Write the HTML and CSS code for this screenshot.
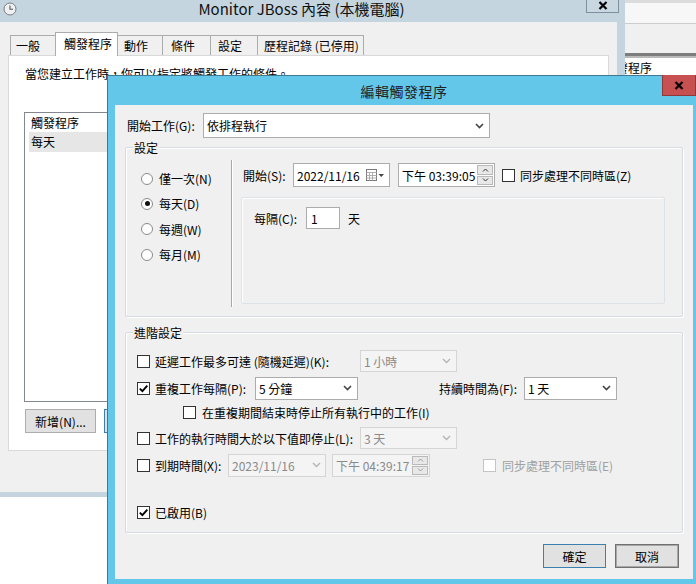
FILE: index.html
```html
<!DOCTYPE html>
<html lang="zh-Hant">
<head>
    <meta charset="UTF-8">
    <meta name="viewport" content="width=device-width, initial-scale=1.0">
    <title>編輯觸發程序</title>
    <link rel="stylesheet" href="styles.css">
</head>
<body>
<div class="desk">

    <!-- window further back, only its right edge shows -->
    <div class="otherwin">
        <div class="ow-top"></div>
        <div class="ow-mid"></div>
        <div class="ow-bar"></div>
        <div class="ow-list">觸發程序</div>
    </div>

    <!-- Monitor JBoss properties -->
    <div class="bgwin">
        <div class="bg-title">
            <svg class="clock" width="14" height="14" viewBox="0 0 14 14">
                <circle cx="7" cy="7" r="6" fill="#eef1f3" stroke="#7d7d7d"/>
                <path d="M7 3.5V7.3h3" fill="none" stroke="#555" stroke-width="1.1"/>
            </svg>
            <span class="bg-title-text">Monitor JBoss 內容 (本機電腦)</span>
            <div class="bg-close">
                <svg width="10" height="9" viewBox="0 0 10 9"><path d="M1.5 1l7 7M8.5 1l-7 7" stroke="#000" stroke-width="2.2"/></svg>
            </div>
        </div>
        <div class="bg-body">
            <div class="tabs">
                <div class="tab t1">一般</div>
                <div class="tab t2 active">觸發程序</div>
                <div class="tab t3">動作</div>
                <div class="tab t4">條件</div>
                <div class="tab t5">設定</div>
                <div class="tab t6">歷程記錄 (已停用)</div>
            </div>
            <div class="tab-page">
                <p class="intro">當您建立工作時，你可以指定將觸發工作的條件。</p>
                <div class="list">
                    <div class="list-head">觸發程序</div>
                    <div class="list-row">每天</div>
                </div>
                <div class="list-btns">
                    <button class="btn add-btn">新增(N)...</button>
                    <button class="btn default edit-btn">編輯(E)...</button>
                </div>
            </div>
        </div>
    </div>

    <!-- edit trigger dialog -->
    <div class="dlg">
        <div class="dlg-title">編輯觸發程序</div>
        <div class="dlg-close">
            <svg width="10" height="9" viewBox="0 0 10 9"><path d="M1.5 1l7 7M8.5 1l-7 7" stroke="#000" stroke-width="2.2"/></svg>
        </div>

        <div class="dlg-body">
            <div class="top-row">
                <span class="task-lbl">開始工作(G):</span>
                <div class="combo task-combo">
                    <span>依排程執行</span>
                    <svg width="9" height="6" viewBox="0 0 9 6"><path d="M1 1l3.5 3.5L8 1" fill="none" stroke="#444" stroke-width="1.6"/></svg>
                </div>
            </div>

            <div class="group sched">
                <span class="group-title">設定</span>
                <div class="radios">
                    <div class="radio-row"><span class="radio"></span>僅一次(N)</div>
                    <div class="radio-row"><span class="radio on"></span>每天(D)</div>
                    <div class="radio-row"><span class="radio"></span>每週(W)</div>
                    <div class="radio-row"><span class="radio"></span>每月(M)</div>
                </div>
                <div class="sched-right">
                    <div class="start-line">
                        <span class="start-lbl">開始(S):</span>
                        <div class="field date">
                            <span>2022/11/16</span>
                            <svg width="19" height="12" viewBox="0 0 19 12">
                                <rect x="0.5" y="0.5" width="10" height="11" fill="#fff" stroke="#7a7a7a"/>
                                <path d="M0.5 3.5h10M0.5 6.5h10M0.5 9h10M3.5 3.5v8M6.5 3.5v8" stroke="#b0b0b0"/>
                                <path d="M12.5 5h5.5l-2.75 3z" fill="#444"/>
                            </svg>
                        </div>
                        <div class="field time">
                            <span>下午 03:39:05</span>
                            <div class="spin">
                                <div class="spin-btn"><svg width="7" height="4" viewBox="0 0 7 4"><path d="M1 3.5l2.5-2.5L6 3.5" fill="none" stroke="#333"/></svg></div>
                                <div class="spin-btn"><svg width="7" height="4" viewBox="0 0 7 4"><path d="M1 .5l2.5 2.5L6 .5" fill="none" stroke="#333"/></svg></div>
                            </div>
                        </div>
                        <span class="cb"></span>
                        <span class="cb-lbl">同步處理不同時區(Z)</span>
                    </div>
                    <div class="recur-box">
                        <div class="recur-line">
                            <span class="recur-lbl">每隔(C):</span>
                            <div class="field num">1</div>
                            <span class="unit">天</span>
                        </div>
                    </div>
                </div>
            </div>

            <div class="group adv">
                <span class="group-title">進階設定</span>

                <div class="adv-row r1">
                    <span class="cb"></span>
                    <span class="cb-lbl lbl-long">延遲工作最多可達 (隨機延遲)(K):</span>
                    <div class="combo small off">
                        <span>1 小時</span>
                        <svg width="9" height="6" viewBox="0 0 9 6"><path d="M1 1l3.5 3.5L8 1" fill="none" stroke="#b5b5b5" stroke-width="1.4"/></svg>
                    </div>
                </div>

                <div class="adv-row r2">
                    <span class="cb on"><svg width="11" height="11" viewBox="0 0 11 11"><path d="M1.8 5.6l2.6 2.6L9.3 2.6" fill="none" stroke="#000" stroke-width="1.9"/></svg></span>
                    <span class="cb-lbl lbl-repeat">重複工作每隔(P):</span>
                    <div class="combo repeat">
                        <span>5 分鐘</span>
                        <svg width="9" height="6" viewBox="0 0 9 6"><path d="M1 1l3.5 3.5L8 1" fill="none" stroke="#444" stroke-width="1.6"/></svg>
                    </div>
                    <span class="dur-lbl">持續時間為(F):</span>
                    <div class="combo dur">
                        <span>1 天</span>
                        <svg width="9" height="6" viewBox="0 0 9 6"><path d="M1 1l3.5 3.5L8 1" fill="none" stroke="#444" stroke-width="1.6"/></svg>
                    </div>
                </div>

                <div class="adv-row r3">
                    <span class="cb"></span>
                    <span class="cb-lbl stop-lbl">在重複期間結束時停止所有執行中的工作(I)</span>
                </div>

                <div class="adv-row r4">
                    <span class="cb"></span>
                    <span class="cb-lbl lbl-long">工作的執行時間大於以下值即停止(L):</span>
                    <div class="combo small off">
                        <span>3 天</span>
                        <svg width="9" height="6" viewBox="0 0 9 6"><path d="M1 1l3.5 3.5L8 1" fill="none" stroke="#b5b5b5" stroke-width="1.4"/></svg>
                    </div>
                </div>

                <div class="adv-row r5">
                    <span class="cb"></span>
                    <span class="cb-lbl lbl-expire">到期時間(X):</span>
                    <div class="field date off">
                        <span>2023/11/16</span>
                        <svg width="9" height="6" viewBox="0 0 9 6"><path d="M1 1l3.5 3.5L8 1" fill="none" stroke="#b5b5b5" stroke-width="1.4"/></svg>
                    </div>
                    <div class="field time off">
                        <span>下午 04:39:17</span>
                        <div class="spin">
                            <div class="spin-btn"><svg width="7" height="4" viewBox="0 0 7 4"><path d="M1 3.5l2.5-2.5L6 3.5" fill="none" stroke="#9a9a9a"/></svg></div>
                            <div class="spin-btn"><svg width="7" height="4" viewBox="0 0 7 4"><path d="M1 .5l2.5 2.5L6 .5" fill="none" stroke="#9a9a9a"/></svg></div>
                        </div>
                    </div>
                    <span class="cb off utc-cb"></span>
                    <span class="cb-lbl off-text utc-lbl">同步處理不同時區(E)</span>
                </div>

                <div class="adv-row r6">
                    <span class="cb on"><svg width="11" height="11" viewBox="0 0 11 11"><path d="M1.8 5.6l2.6 2.6L9.3 2.6" fill="none" stroke="#000" stroke-width="1.9"/></svg></span>
                    <span class="cb-lbl">已啟用(B)</span>
                </div>
            </div>

            <div class="dlg-btns">
                <button class="btn default ok-btn">確定</button>
                <button class="btn cancel-btn">取消</button>
            </div>
        </div>
    </div>

</div>
</body>
</html>
```

FILE: styles.css
```css
*, *::before, *::after{
    margin: 0;
    padding: 0;
    box-sizing: border-box;
}

body{
    font-family: "Noto Sans CJK TC", "Noto Sans CJK SC", sans-serif;
    font-size: 12px;
    color: #000;
    background: #fff;
}

.desk{
    position: relative;
    width: 696px;
    height: 584px;
    overflow: hidden;
    background: #fff;
}

/* window behind everything */
.otherwin{
    position: absolute;
    left: 560px;
    top: 0;
    width: 200px;
    height: 140px;
    background: #fff;
    border-top: 3px solid #dcdcdc;
}
.ow-top{
    height: 21px;
    background: #f7f7f7;
    border-bottom: 1px solid #cdcdcd;
}
.ow-mid{
    height: 29px;
    background: #f0f0f0;
}
.ow-bar{
    height: 5px;
    background: #7d7d7d;
    border-bottom: 2px solid #b9b9b9;
}
.ow-list{
    padding: 1px 0 0 44px;
}

/* Monitor JBoss window */
.bgwin{
    position: absolute;
    left: 0;
    top: 0;
    width: 625px;
    height: 497px;
    background: #c5d5e0;
    padding: 0 8px 5px 0;
    display: flex;
    flex-direction: column;
}
.bg-title{
    position: relative;
    height: 22px;
    display: flex;
    align-items: flex-start;
    padding-left: 3px;
}
.clock{
    margin-top: 2px;
    flex: none;
}
.bg-title-text{
    flex: 1;
    text-align: center;
    font-size: 15px;
    line-height: 18px;
    padding-right: 31px;
    color: #111;
}
.bg-close{
    position: absolute;
    left: 586px;
    top: -8px;
    width: 33px;
    height: 21px;
    border: 1px solid #7f8f9b;
    background: #c9d7e1;
    display: flex;
    justify-content: center;
    align-items: center;
    padding-top: 5px;
}
.bg-body{
    flex: 1;
    background: #f0f0f0;
    padding-top: 10px;
}
.tabs{
    display: flex;
    align-items: flex-end;
    height: 24px;
    margin-bottom: -1px;
    padding-left: 10px;
    position: relative;
    z-index: 1;
}
.tab{
    height: 20px;
    margin-bottom: 1px;
    margin-right: -1px;
    border: 1px solid #acacac;
    border-bottom: 0;
    background: #f0f0f0;
    padding-left: 6px;
    display: flex;
    align-items: center;
    white-space: nowrap;
}
.tab.active{
    height: 24px;
    margin-bottom: 0;
    background: #fff;
    padding-bottom: 2px;
    padding-left: 8px;
    position: relative;
    z-index: 1;
}
.t1{ width: 46px; padding-left: 5px; }
.t2{ width: 63px; }
.t3{ width: 46px; }
.t4{ width: 49px; padding-left: 8px; }
.t5{ width: 48px; padding-left: 7px; }
.t6{ width: 107px; }

.tab-page{
    margin-left: 8px;
    width: 601px;
    height: 396px;
    background: #fff;
    border: 1px solid #d9d9d9;
    padding: 9px 0 0 16px;
}
.intro{
    line-height: 17px;
}
.list{
    margin: 30px 0 0 -1px;
    width: 580px;
    height: 290px;
    border: 1px solid #828790;
    background: #fff;
}
.list-head{
    height: 19px;
    line-height: 19px;
    padding-left: 6px;
}
.list-row{
    margin-left: 4px;
    height: 20px;
    line-height: 20px;
    padding-left: 2px;
    background: #e6e6e6;
}
.list-btns{
    display: flex;
    gap: 8px;
    margin-top: 7px;
}

/* buttons */
.btn{
    font-family: inherit;
    font-size: 12px;
    color: #000;
    height: 24px;
    background: #e1e1e1;
    border: 1px solid #adadad;
}
.btn.default{
    border-color: #3c7fb1;
}
.add-btn, .edit-btn{ width: 71px; }
.ok-btn{ width: 63px; }
.cancel-btn{
    width: 64px;
    border-color: #707070;
    box-shadow: inset 0 0 0 1px #a8a8a8;
}

/* dialog */
.dlg{
    position: absolute;
    left: 107px;
    top: 75px;
    width: 594px;
    height: 512px;
    background: #63c7ea;
    border: 1px solid #3f7890;
    padding: 0 7px 7px 7px;
    display: flex;
    flex-direction: column;
    z-index: 2;
}
.dlg-title{
    height: 29px;
    display: flex;
    align-items: center;
    justify-content: center;
    font-size: 14px;
    letter-spacing: 0.5px;
    color: #222;
}
.dlg-close{
    position: absolute;
    right: 4px;
    top: -1px;
    width: 34px;
    height: 21px;
    background: #c75050;
    border: 1px solid #8e3a3a;
    border-top: 0;
    display: flex;
    justify-content: center;
    align-items: center;
}
.dlg-body{
    flex: 1;
    background: #f0f0f0;
    padding: 8px 0 0 10px;
    display: flex;
    flex-direction: column;
}

.top-row{
    display: flex;
    align-items: center;
    height: 25px;
}
.task-lbl{
    width: 78px;
    padding-left: 2px;
}

/* inputs */
.combo, .field{
    display: flex;
    align-items: center;
    justify-content: space-between;
    background: #fff;
    border: 1px solid #acacac;
    padding-left: 3px;
    white-space: nowrap;
}
.combo svg{
    margin-right: 5px;
}
.task-combo{
    width: 287px;
    height: 25px;
}
.combo.off, .field.off{
    background: #f4f4f4;
    border-color: #d5d5d5;
    color: #8a8a8a;
}
.small{
    width: 97px;
    height: 22px;
}
.repeat{
    width: 103px;
    height: 23px;
}
.dur{
    width: 93px;
    height: 23px;
}
.field.date{
    width: 97px;
    height: 24px;
}
.field.date svg{
    margin-right: 4px;
}
.field.time{
    width: 97px;
    height: 24px;
    margin-left: 8px;
    padding-right: 1px;
}
.spin{
    width: 16px;
    height: 20px;
    display: flex;
    flex-direction: column;
    gap: 1px;
}
.spin-btn{
    flex: 1;
    background: #e8e8e8;
    border: 1px solid #b9b9b9;
    display: flex;
    justify-content: center;
    align-items: center;
}
.field.num{
    width: 34px;
    height: 22px;
    padding-left: 4px;
}

/* group boxes */
.group{
    position: relative;
    width: 558px;
    border: 1px solid #d5dbe0;
    border-radius: 2px;
    box-shadow: inset 1px 1px 0 #fff, 1px 1px 0 #fff;
}
.group-title{
    position: absolute;
    top: -9px;
    left: 7px;
    padding: 0 1px;
    line-height: 17px;
    background: #f0f0f0;
}
.sched{
    margin-top: 9px;
    height: 170px;
    display: flex;
    padding-top: 12px;
}
.radios{
    width: 105px;
    padding: 6px 0 0 15px;
}
.radio-row{
    height: 25.33px;
    display: flex;
    align-items: center;
    gap: 6px;
}
.radio{
    width: 12px;
    height: 12px;
    border-radius: 50%;
    border: 1px solid #8a8a8a;
    background: #fff;
    display: flex;
    justify-content: center;
    align-items: center;
}
.radio.on::after{
    content: "";
    width: 5px;
    height: 5px;
    border-radius: 50%;
    background: #111;
}
.sched-right{
    height: 147px;
    border-left: 1px solid #a7a7a7;
    box-shadow: inset 1px 0 0 #fff;
    padding: 3px 0 0 9px;
}
.start-line{
    display: flex;
    align-items: center;
    height: 24px;
}
.start-lbl{
    width: 52px;
    padding-left: 2px;
}
.recur-box{
    margin-top: 10px;
    width: 424px;
    height: 107px;
    border: 1px solid #dde2e6;
    border-radius: 2px;
    box-shadow: inset 1px 1px 0 #fff;
    padding: 9px 0 0 12px;
}
.recur-line{
    display: flex;
    align-items: center;
    height: 22px;
}
.recur-lbl{
    width: 52px;
}
.unit{
    margin-left: 8px;
}

/* checkboxes */
.cb{
    width: 13px;
    height: 13px;
    flex: none;
    border: 1px solid #333;
    background: #fff;
    display: flex;
    justify-content: center;
    align-items: center;
}
.cb.off{
    border-color: #c4c4c4;
}
.cb-lbl{
    margin-left: 5px;
    white-space: nowrap;
}
.start-line .cb{
    margin-left: 7px;
}
.off-text{
    color: #a0a0a0;
}

/* advanced settings */
.adv{
    margin-top: 15px;
    height: 201px;
    padding: 16px 0 0 11px;
}
.adv-row{
    display: flex;
    align-items: center;
    height: 24px;
}
.r2, .r5{ margin-top: 3px; }
.r4{ margin-top: 2px; }
.r6{ margin-top: 23px; }
.lbl-long{ width: 205px; }
.lbl-repeat{ width: 100px; }
.dur-lbl{
    width: 166px;
    text-align: right;
    padding-right: 7px;
}
.r3{ padding-left: 46px; }
.stop-lbl{ margin-left: 6px; }
.lbl-expire{ width: 73px; }
.r5 .field.date{
    width: 98px;
    height: 23px;
}
.r5 .field.time{
    width: 98px;
    height: 23px;
    margin-left: 6px;
}
.r5 .spin{ height: 19px; }
.utc-cb{ margin-left: 53px; }
.utc-lbl{ margin-left: 6px; }

.dlg-btns{
    margin-top: 11px;
    display: flex;
    justify-content: flex-end;
    gap: 9px;
    padding-right: 14px;
}
```
